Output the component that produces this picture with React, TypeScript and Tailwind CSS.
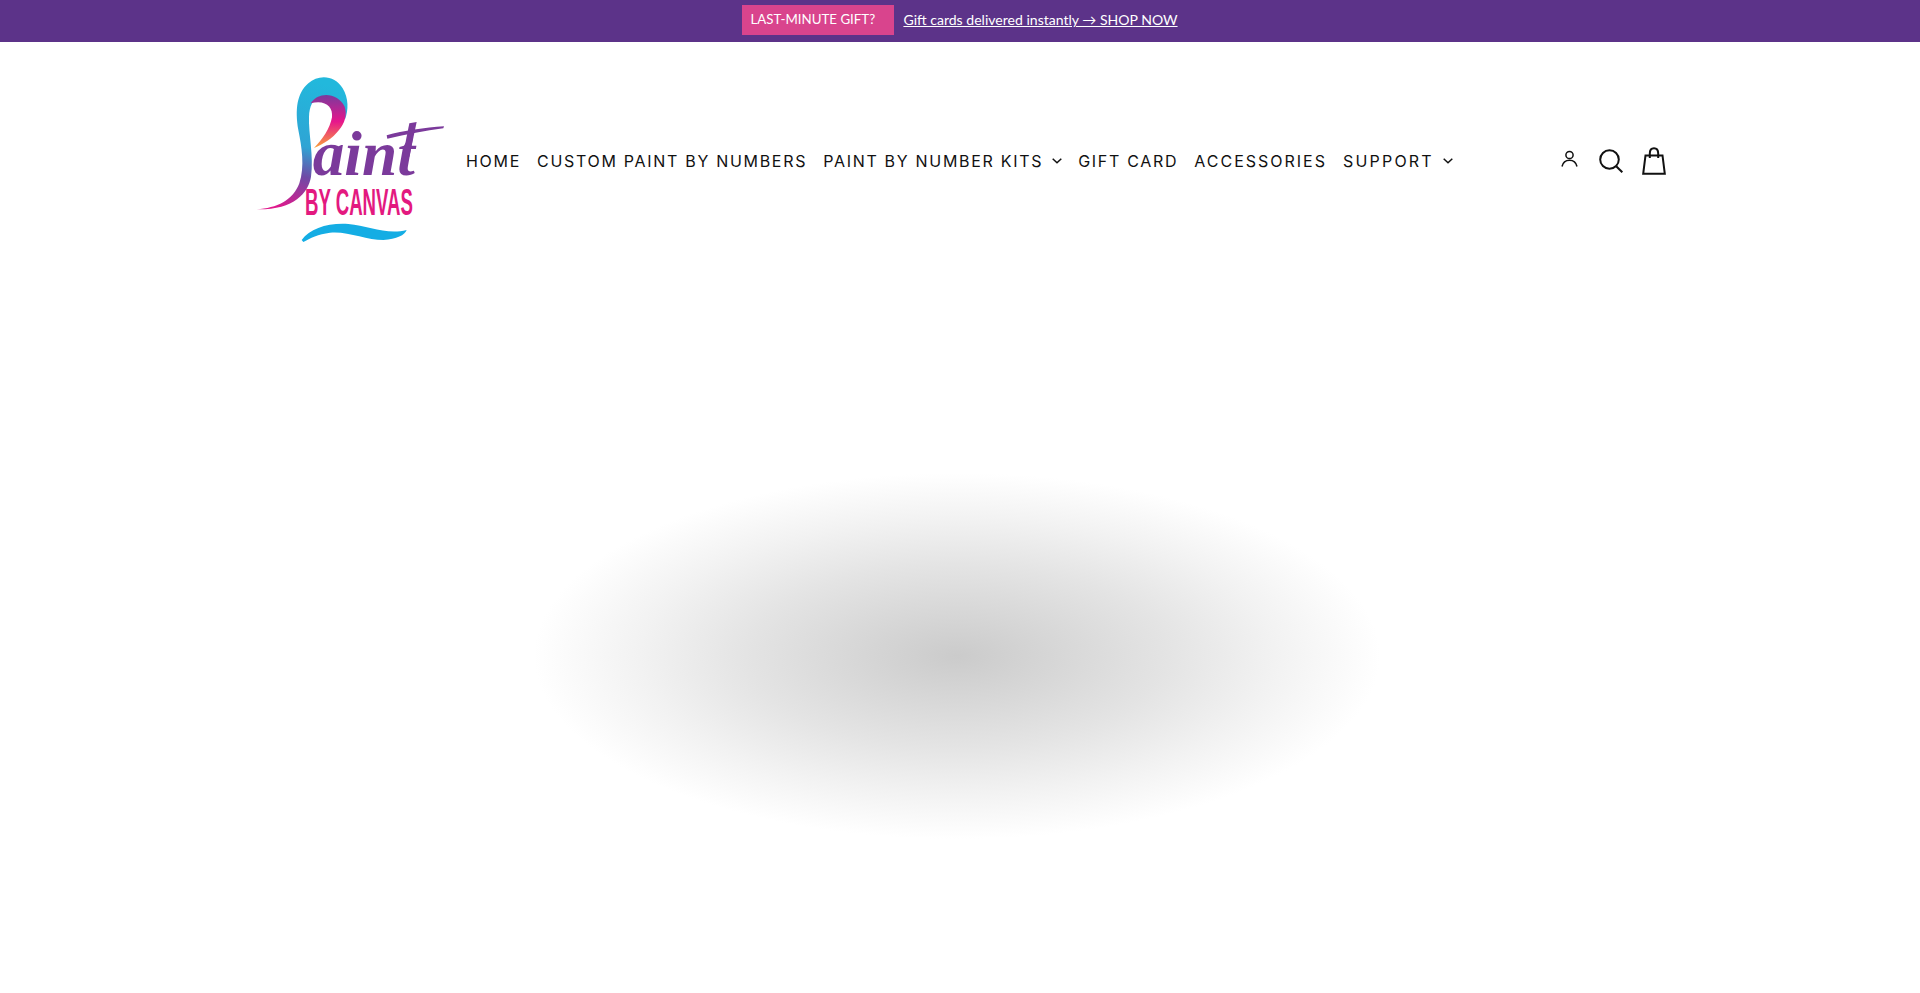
const navItems = [
  { label: "HOME", className: "" },
  { label: "CUSTOM PAINT BY NUMBERS", className: "" },
  { label: "PAINT BY NUMBER KITS", caret: true, className: "" },
  { label: "GIFT CARD", className: "" },
  { label: "ACCESSORIES", className: "tracking-[2px]" },
  { label: "SUPPORT", caret: true, className: "tracking-[2.2px]" },
];

const Logo = () => {
  return (
    <svg width="220" height="190" viewBox="0 0 660 570" className="shrink-0">
      <defs>
        <linearGradient id="swoosh" x1="0.5" y1="0" x2="0.3" y2="1">
          <stop offset="0" stopColor="#22b8dc" />
          <stop offset="0.5" stopColor="#2fa4d4" />
          <stop offset="0.72" stopColor="#6f4aa6" />
          <stop offset="1" stopColor="#e0188c" />
        </linearGradient>
        <linearGradient id="crescent" x1="0.4" y1="0" x2="0.4" y2="1">
          <stop offset="0" stopColor="#7a3a9c" />
          <stop offset="0.5" stopColor="#e6168c" />
          <stop offset="1" stopColor="#f9a23a" />
        </linearGradient>
      </defs>
      {/* blue P stroke */}
      <path
        d="M50 448 C110 445 160 420 178 370 C195 320 185 260 175 210 C165 150 170 100 205 70 C235 42 285 45 308 85 C326 115 326 150 315 178 C300 140 270 105 240 110 C218 115 208 140 207 170 C205 220 222 290 213 350 C205 400 160 450 50 448 Z"
        fill="url(#swoosh)"
      />
      <path
        d="M212 130 C235 92 295 98 314 140 C322 165 314 190 297 210 C277 236 250 252 222 264 C248 238 270 205 276 172 C280 140 255 118 212 130 Z"
        fill="url(#crescent)"
      />
      <text
        x="218"
        y="345"
        fill="#7b3a9b"
        fontSize="190"
        fontStyle="italic"
        fontWeight="700"
        fontFamily="'Liberation Serif', serif"
      >
        aint
      </text>
      {/* tall t stem and brush crossbar */}
      <path d="M508 190 L530 186 L508 290 L488 290 Z" fill="#7b3a9b" />
      <path d="M440 226 C490 212 555 203 612 199 L610 205 C555 212 500 224 442 236 Z" fill="#7b3a9b" />
      <text
        transform="translate(195 465) scale(0.499 1)"
        fill="#e3197f"
        fontSize="112"
        fontWeight="700"
        fontFamily="'Liberation Sans', sans-serif"
      >
        BY CANVAS
      </text>
      <path
        d="M185 540 C210 505 265 488 325 492 C385 498 440 525 500 510 C495 525 470 538 430 540 C380 540 320 512 270 518 C235 522 210 535 190 546 Z"
        fill="#14ade4"
      />
    </svg>
  );
};

const Caret = () => (
  <svg width="10" height="6" viewBox="0 0 10 6" fill="none" stroke="#111" strokeWidth="1.5" className="ml-[9px]">
    <path d="M0.7 0.8 L5 4.8 L9.3 0.8" />
  </svg>
);

export default function App() {
  return (
    <div className="min-h-[993px] bg-white overflow-hidden">
      {/* announcement bar */}
      <div className="h-[42px] bg-[#5c3389] flex items-center justify-center pb-[2px] font-['Lato',sans-serif] text-white">
        <span className="h-[30px] w-[152px] bg-[#d9448d] flex items-center pl-2 text-[13.3px] whitespace-nowrap">
          LAST-MINUTE GIFT?
        </span>
        <a className="ml-[9px] text-[14.05px] underline whitespace-nowrap">
          Gift cards delivered instantly → SHOP NOW
        </a>
      </div>

      {/* header */}
      <header className="flex items-center pt-[18px] pl-[240px] pr-[254px]">
        <Logo />
        <nav className="flex items-center gap-4 ml-[6px] pt-3 font-['Inter',sans-serif] text-[16px] tracking-[1.7px] text-[#111]">
          {navItems.map((item) => (
            <a key={item.label} className={`flex items-center whitespace-nowrap ${item.className}`}>
              {item.label}
              {item.caret && <Caret />}
            </a>
          ))}
        </nav>
        <div className="ml-auto flex items-center pt-3">
          <svg width="17" height="17" viewBox="0 0 17 17" fill="none" stroke="#111" strokeWidth="1.5" className="mr-[21px] mb-[6px]">
            <circle cx="8.5" cy="5" r="3.6" />
            <path d="M1 16.5 C2 12 5 10.2 8.5 10.2 C12 10.2 15 12 16 16.5" />
          </svg>
          <svg width="24" height="24" viewBox="0 0 24 24" fill="none" stroke="#111" strokeWidth="2" className="mr-[19px]">
            <circle cx="10.5" cy="10.5" r="9.3" />
            <path d="M17.2 17.2 L23.3 23.3" />
          </svg>
          <svg width="24" height="28" viewBox="0 0 24 28" fill="none" stroke="#111" strokeWidth="2">
            <path d="M3.5 8.5 H20.5 L22.8 26.8 H1.2 Z" />
            <path d="M7.8 11 V6.5 C7.8 3 9.5 1.2 12 1.2 C14.5 1.2 16.2 3 16.2 6.5 V11" />
          </svg>
        </div>
      </header>

      {/* image placeholder */}
      <main className="flex justify-center mt-[223px] pr-[6px]">
        <div className="w-[846px] h-[366px] bg-[radial-gradient(closest-side,#cbcbcb_0%,#e4e4e4_50%,#f2f2f2_75%,#ffffff_100%)]"></div>
      </main>
    </div>
  );
}
